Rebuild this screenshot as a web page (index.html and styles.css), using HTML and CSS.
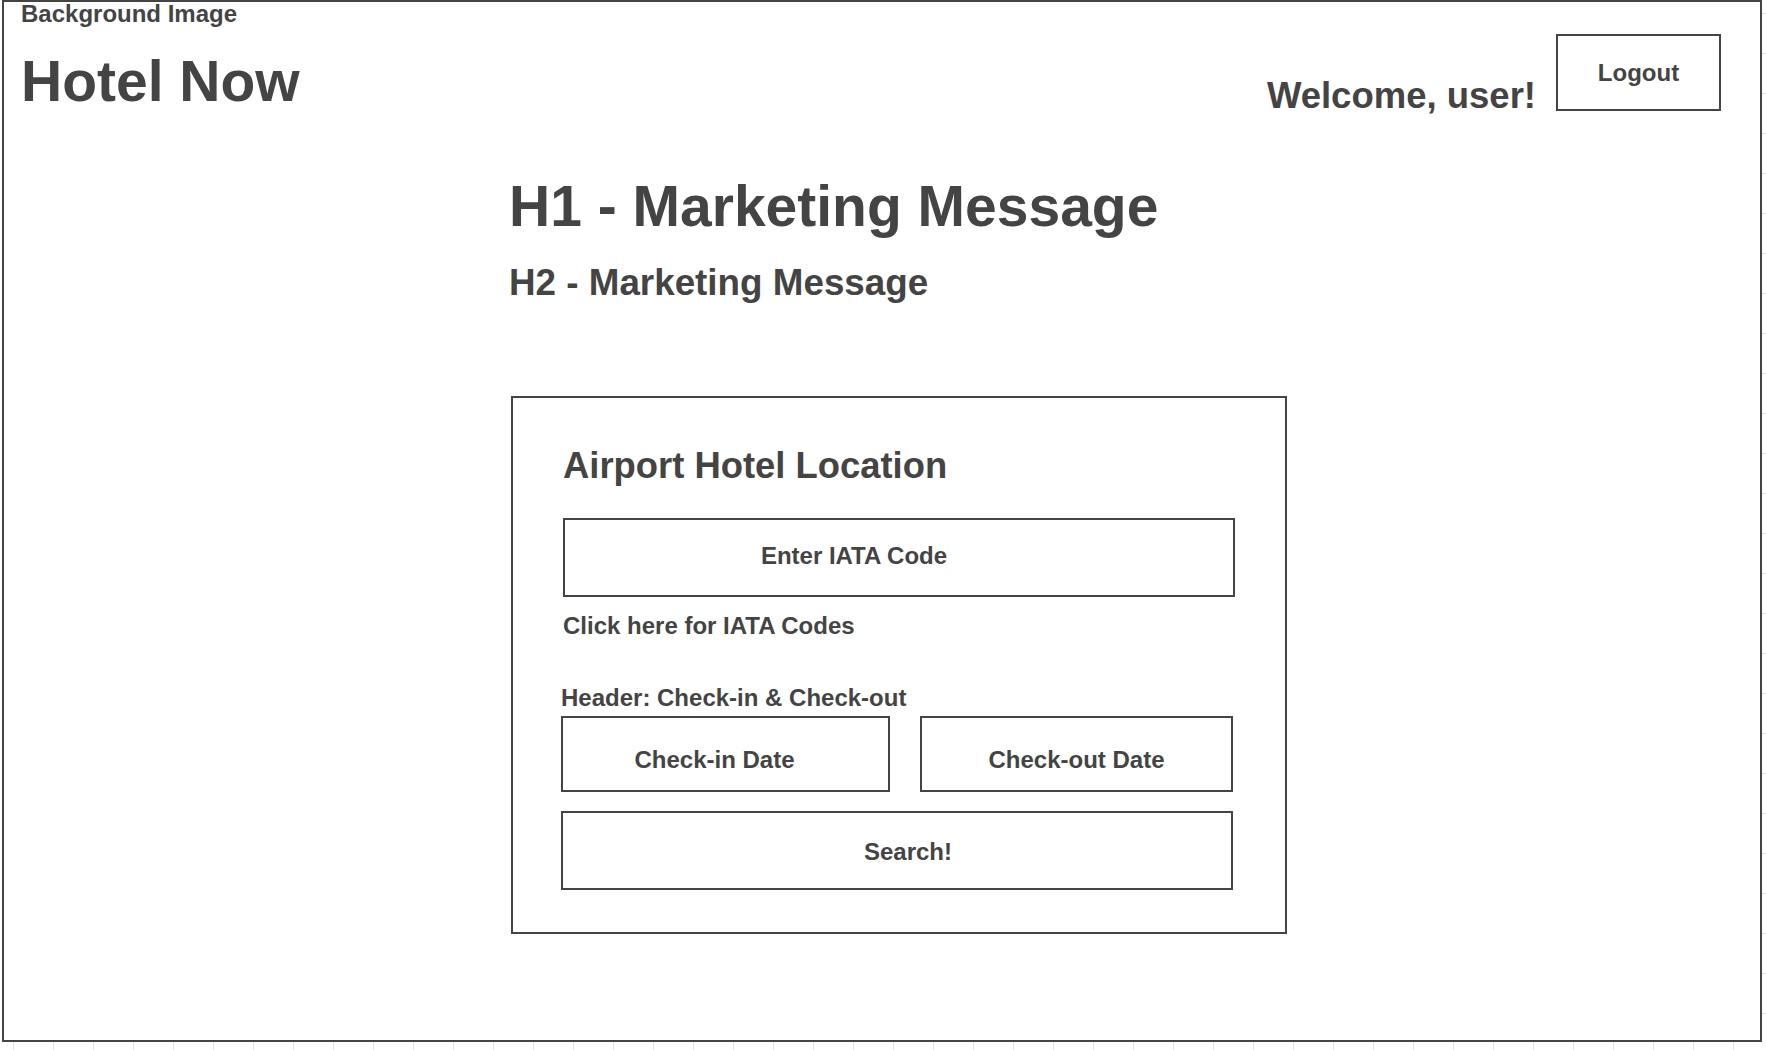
FILE: index.html
```html
<!DOCTYPE html>
<html lang="en">
<head>
<meta charset="utf-8">
<title>Hotel Now</title>
<link rel="stylesheet" href="styles.css">
</head>
<body>
<div class="page">
  <div class="frame">
    <div class="bg-label">Background Image</div>
    <header class="topbar">
      <div class="brand">Hotel Now</div>
      <div class="user">
        <span class="welcome">Welcome, user!</span>
        <div class="logout">Logout</div>
      </div>
    </header>
    <main class="main">
      <h1 class="h1">H1 - Marketing Message</h1>
      <h2 class="h2">H2 - Marketing Message</h2>
      <section class="panel">
        <div class="panel-title">Airport Hotel Location</div>
        <div class="field iata">Enter IATA Code</div>
        <div class="link">Click here for IATA Codes</div>
        <div class="dates-group">
          <div class="group-label">Header: Check-in &amp; Check-out</div>
          <div class="dates">
            <div class="field checkin">Check-in Date</div>
            <div class="field checkout">Check-out Date</div>
          </div>
          <div class="field search">Search!</div>
        </div>
      </section>
    </main>
  </div>
  <div class="ruler-right"></div>
  <div class="ruler-bottom"></div>
</div>
</body>
</html>
```

FILE: styles.css
```css
html, body {
  margin: 0;
  padding: 0;
  background: #fff;
}

body {
  font-family: "Liberation Sans", Arial, Helvetica, sans-serif;
  font-weight: bold;
  color: #444;
}

.page {
  display: grid;
  grid-template-columns: 1762px 4px;
  grid-template-rows: 1042px 8px;
  width: 1766px;
  height: 1050px;
  overflow: hidden;
}

.frame {
  margin-left: 2px;
  border: 2px solid #444;
  box-sizing: border-box;
  background: #fff;
  display: flex;
  flex-direction: column;
  overflow: hidden;
}

.ruler-right {
  background: repeating-linear-gradient(to bottom, transparent 0 13px, #e2e2e2 13px 14px, transparent 14px 40px);
}

.ruler-bottom {
  grid-column: 1 / span 2;
  background: repeating-linear-gradient(to right, transparent 0 13px, #e2e2e2 13px 14px, transparent 14px 40px);
}

.bg-label {
  font-size: 24px;
  line-height: 24px;
  padding-left: 17px;
}

.topbar {
  display: flex;
  justify-content: space-between;
  align-items: flex-start;
  padding: 0 39px 0 17px;
}

.brand {
  font-size: 57px;
  line-height: 64px;
  margin-top: 23px;
}

.user {
  display: flex;
  align-items: flex-start;
  gap: 20px;
}

.welcome {
  font-size: 36.5px;
  line-height: 40px;
  margin-top: 50px;
}

.logout {
  width: 165px;
  height: 77px;
  box-sizing: border-box;
  border: 2px solid #444;
  display: flex;
  align-items: center;
  justify-content: center;
  font-size: 24px;
  margin-top: 8px;
}

.main {
  padding-left: 505px;
  margin-top: 58px;
}

.h1 {
  margin: 0;
  font-size: 57px;
  line-height: 64px;
  font-weight: bold;
}

.h2 {
  margin: 25px 0 0;
  font-size: 36.8px;
  line-height: 40px;
  font-weight: bold;
}

.panel {
  margin-top: 93px;
  margin-left: 2px;
  width: 776px;
  box-sizing: border-box;
  border: 2px solid #444;
  padding: 48px 50px 42px;
}

.panel-title {
  font-size: 36.4px;
  line-height: 40px;
}

.field {
  box-sizing: border-box;
  border: 2px solid #444;
  display: flex;
  align-items: center;
  justify-content: center;
  font-size: 24px;
  line-height: 28px;
}

.iata {
  margin-top: 32px;
  height: 79px;
  padding-right: 90px;
  padding-bottom: 4px;
}

.link,
.group-label {
  font-size: 24px;
  line-height: 28px;
}

.link {
  margin-top: 15px;
}

.dates-group {
  margin: 44px 2px 0 -2px;
}

.dates {
  display: grid;
  grid-template-columns: 329px 313px;
  column-gap: 30px;
  margin-top: 4px;
}

.checkin,
.checkout {
  height: 76px;
  padding-top: 11px;
}

.checkin {
  padding-right: 22px;
}

.search {
  margin-top: 19px;
  height: 79px;
  padding-left: 22px;
  padding-top: 3px;
}
```
